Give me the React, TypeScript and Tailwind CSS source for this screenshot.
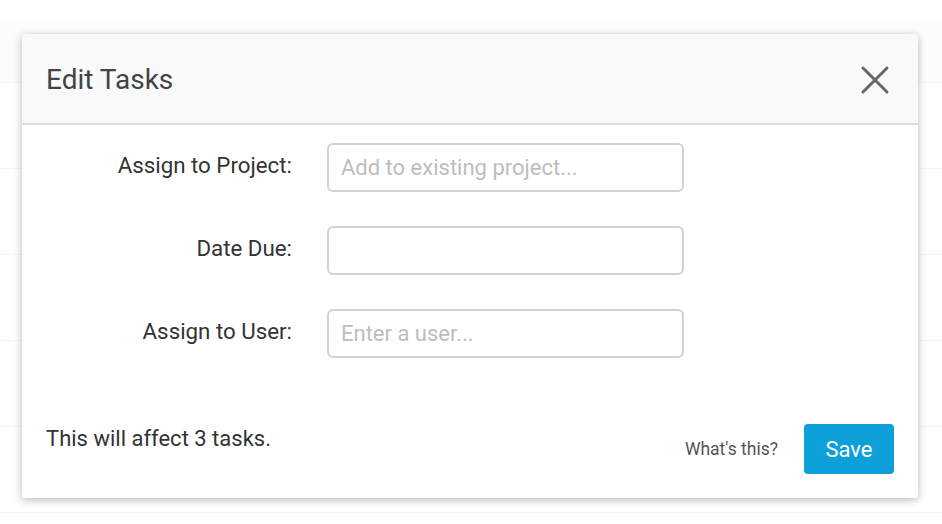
import React from "react";

const font = { fontFamily: "Roboto, 'Liberation Sans', sans-serif" };

// faint table rows behind the dialog
const BackgroundTable = () => (
  <div className="flex flex-col">
    <div className="h-[20px] bg-white" />
    <div className="h-[63px] bg-[#fcfcfc] border-b border-[#f5f5f5]" />
    {[0, 1, 2, 3, 4].map((i) => (
      <div key={i} className="h-[86px] border-b border-[#f6f6f6]" />
    ))}
  </div>
);

const Field = ({ label, placeholder }: { label: string; placeholder?: string }) => (
  <div className="flex items-center gap-[35px]">
    <label className="w-[270px] text-right text-[22.3px] text-[#333] -mt-[3px]">{label}</label>
    <input
      placeholder={placeholder}
      className="w-[357px] h-[49px] rounded-[6px] border-2 border-[#d2d2d2] px-[12px] text-[22px] text-[#333] placeholder:text-[#bdbdbd] outline-none"
    />
  </div>
);

const App: React.FC = () => {
  return (
    <div className="relative w-[942px] h-[524px] overflow-hidden bg-white" style={font}>
      <BackgroundTable />

      {/* dialog */}
      <div className="absolute left-[22px] top-[34px] w-[896px] h-[464px] bg-white rounded-[3px] shadow-[0_2px_8px_rgba(0,0,0,0.28)] flex flex-col">
        <div className="h-[91px] bg-[#f9f9f9] border-b-2 border-[#dddddd] rounded-t-[3px] flex items-center justify-between pl-[24px] pr-[28px]">
          <h2 className="text-[28px] text-[#444] pt-[2px]">Edit Tasks</h2>
          <svg width="30" height="30" viewBox="0 0 30 30" className="mt-[2px]">
            <path d="M3 3 L27 27 M27 3 L3 27" stroke="#666" strokeWidth="3" strokeLinecap="round" />
          </svg>
        </div>

        <div className="flex flex-col gap-[34px] pt-[18px]">
          <Field label="Assign to Project:" placeholder="Add to existing project..." />
          <Field label="Date Due:" />
          <Field label="Assign to User:" placeholder="Enter a user..." />
        </div>

        <div className="flex justify-between items-start mt-auto pl-[24px] pr-[24px] pb-[24px]">
          <p className="text-[22px] text-[#333] leading-[1.3] pt-[1px]">This will affect 3 tasks.</p>
          <div className="flex items-center gap-[26px]">
            <span className="text-[17.5px] text-[#555]">What's this?</span>
            <button className="w-[90px] h-[50px] rounded-[4px] bg-[#0c9fd8] text-white text-[22px]">
              Save
            </button>
          </div>
        </div>
      </div>
    </div>
  );
};

export default App;
